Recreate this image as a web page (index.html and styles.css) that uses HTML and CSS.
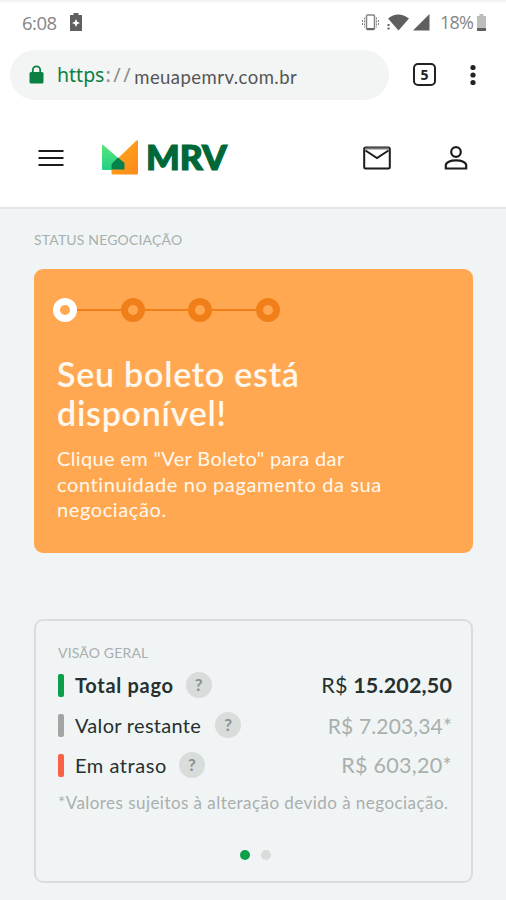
FILE: index.html
```html
<!DOCTYPE html>
<html lang="pt-BR">
  <head>
    <meta charset="UTF-8" />
    <meta name="viewport" content="width=device-width, initial-scale=1.0" />
    <title>Meu Apê MRV</title>
    <link rel="stylesheet" href="styles.css">
  </head>
  <body>
    <div class="status-bar">
      <span class="time">6:08</span>
      <svg class="charging" width="12" height="18" viewBox="0 0 12 18">
        <path fill="#5f5f5f" d="M3.5 0h5v2H12v16H0V2h3.5z" />
        <path fill="#fff" d="M6 6l1.2 2.8L10 10l-2.800 1.200L6 14l-1.200-2.800L2 10l2.800-1.200z" />
      </svg>
      <div class="status-icons">
        <svg width="17" height="17" viewBox="0 0 17 17" fill="none" stroke="#858585">
          <rect x="4.500" y="1" width="8" height="14.500" rx="1" stroke-width="1.500" />
          <path d="M5 15h7" stroke="#666" stroke-width="2" />
          <path d="M2.500 3.500v10M14.500 3.500v10M.5 6v5M16.500 6v5" stroke-dasharray="2 1" />
        </svg>
        <svg class="wifi" width="22" height="17" viewBox="0 0 22 17" fill="#5f5f5f">
          <path d="M1 4.500Q11-3.500 22 4.500L11.500 16.500z" />
          <path d="M.5 10h2v2h-2zM.5 13.500h2v2h-2z" />
        </svg>
        <svg class="signal" width="17" height="17" viewBox="0 0 17 17">
          <path fill="#5f5f5f" d="M16.500 0v16.500H0z" />
        </svg>
        <span class="percent">18%</span>
        <svg class="battery" width="9" height="17" viewBox="0 0 9 17">
          <path fill="#bdbdbd" d="M2.500 0h4v2H9v15H0V2h2.500z" />
          <path fill="#5f5f5f" d="M0 14h9v3H0z" />
        </svg>
      </div>
    </div>

    <div class="browser-bar">
      <div class="address">
        <svg width="15" height="20" viewBox="0 0 15 20">
          <rect x=".5" y="7" width="14" height="11.500" rx="1.500" fill="#0b8043" />
          <path d="M3.800 8V5a3.700 3.700 0 0 1 7.400 0v3" fill="none" stroke="#0b8043" stroke-width="1.800" />
        </svg>
        <span class="scheme">https</span><span class="slashes">://</span><span class="domain">meuapemrv.com.br</span>
      </div>
      <div class="tabs">5</div>
      <svg class="more" width="6" height="22" viewBox="0 0 6 22" fill="#222">
        <circle cx="3" cy="3.500" r="2.600" />
        <circle cx="3" cy="11" r="2.600" />
        <circle cx="3" cy="18.500" r="2.600" />
      </svg>
    </div>

    <header class="header">
      <svg class="menu" width="26" height="18" viewBox="0 0 26 18" stroke="#1c1c1c" stroke-width="2.200">
        <path d="M.5 2h25M.5 9h25M.5 16h25" />
      </svg>
      <svg class="logo" width="140" height="50" viewBox="0 -6 140 50">
        <defs>
          <linearGradient id="green" x1="0" y1="0" x2="0" y2="1">
            <stop offset="0" stop-color="#55e67c" />
            <stop offset="1" stop-color="#25cf86" />
          </linearGradient>
          <linearGradient id="orange" x1="0" y1="0" x2="1" y2="1">
            <stop offset="0" stop-color="#ffa91e" />
            <stop offset="1" stop-color="#fb8a19" />
          </linearGradient>
        </defs>
        <path fill="url(#green)" d="M1 7q0-2 1.500-.7L23.500 24.500v6.500H2q-1 0-1-1z" />
        <path fill="url(#orange)" d="M10.500 25.500L35.500 1.600q1.500-1 1.500 1V34q0 1.500-1.500 1.500h-24q-1 0-1-1z" />
        <path fill="#05814b" d="M10.500 25L17 18.500l6.500 5.500v6.500h-13z" />
        <text class="logo-text" x="45" y="31" textLength="81" lengthAdjust="spacingAndGlyphs">MRV</text>
      </svg>
      <svg class="mail" width="28" height="24" viewBox="0 0 28 24" fill="none" stroke="#1c1c1c" stroke-width="2">
        <rect x="1.200" y="1.500" width="25.600" height="21" rx="1.500" />
        <path d="M2 2.500h24" stroke="#777" />
        <path d="M2.500 4.500L14 12l11.500-7.500" />
      </svg>
      <svg class="user" width="24" height="24" viewBox="0 0 24 24" fill="none" stroke="#1c1c1c" stroke-width="2.200">
        <circle cx="12" cy="6" r="4.800" />
        <path d="M1.800 22.500v-3.200c0-3 4.500-5 10.200-5s10.200 2 10.200 5v3.200z" />
      </svg>
    </header>

    <main class="content">
      <h2 class="section-label">STATUS NEGOCIAÇÃO</h2>

      <section class="status-card">
        <div class="steps">
          <span class="step active"></span>
          <span class="line"></span>
          <span class="step"></span>
          <span class="line"></span>
          <span class="step"></span>
          <span class="line"></span>
          <span class="step"></span>
        </div>
        <h1>Seu boleto está<br>disponível!</h1>
        <p>
          <span class="lead">Clique em "Ver Boleto" para dar</span><br>
          continuidade no pagamento da sua<br>
          negociação.
        </p>
      </section>

      <section class="overview">
        <h2 class="overview-label">VISÃO GERAL</h2>
        <div class="row paid">
          <span class="name">Total pago</span>
          <span class="help">?</span>
          <span class="value">R$ <b>15.202,50</b></span>
        </div>
        <div class="row remaining">
          <span class="name">Valor restante</span>
          <span class="help">?</span>
          <span class="value">R$ 7.203,34*</span>
        </div>
        <div class="row late">
          <span class="name">Em atraso</span>
          <span class="help">?</span>
          <span class="value">R$ 603,20*</span>
        </div>
        <p class="note">*Valores sujeitos à alteração devido à negociação.</p>
        <div class="dots">
          <span class="dot current"></span>
          <span class="dot"></span>
        </div>
      </section>
    </main>
  </body>
</html>
```

FILE: styles.css
```css
* {
  box-sizing: border-box;
}

body {
  margin: 0;
  height: 900px;
  overflow: hidden;
  background-color: #f0f4f4;
  font-family: Lato, "Open Sans", sans-serif;
  color: #26302f;
}

h1,
h2,
p {
  margin: 0;
}

svg {
  display: block;
  flex: none;
}

.status-bar {
  display: flex;
  align-items: center;
  height: 44px;
  padding: 0 20px 2px 22px;
  background-color: #fff;
  border-top: 2px solid #f3f3f3;
  font-family: "Open Sans", sans-serif;
  font-size: 18px;
  color: #858585;
}

.time {
  width: 36px;
  font-size: 18.500px;
  letter-spacing: -0.5px;
}

.charging {
  margin-left: 12px;
}

.status-icons {
  display: flex;
  align-items: center;
  margin-left: auto;
}

.wifi {
  margin-left: 8px;
}

.signal {
  margin-left: 4px;
}

.percent {
  width: 34px;
  margin-left: 10px;
  letter-spacing: -0.8px;
}

.battery {
  margin-left: 3px;
}

.browser-bar {
  display: flex;
  align-items: center;
  height: 64px;
  padding: 0 30px 3px 10px;
  background-color: #fff;
}

.address {
  display: flex;
  align-items: center;
  width: 379px;
  height: 50px;
  padding-left: 19px;
  background-color: #f3f4f4;
  border-radius: 25px;
  white-space: nowrap;
}

.scheme {
  margin-left: 13px;
  font-family: "Noto Sans", sans-serif;
  font-size: 19.500px;
  color: #0b8043;
}

.slashes {
  margin-left: 1px;
  font-family: "Noto Sans", sans-serif;
  font-size: 20px;
  letter-spacing: 2.500px;
  color: #8f8f8f;
}

.domain {
  margin-top: 4px;
  margin-left: 1px;
  font-size: 18.500px;
  letter-spacing: 0.45px;
  color: #555;
}

.tabs {
  width: 23px;
  height: 23px;
  margin-left: 24px;
  border: 2px solid #222;
  border-radius: 5px;
  font-family: "Open Sans", sans-serif;
  font-size: 14px;
  font-weight: 700;
  line-height: 19px;
  text-align: center;
  color: #222;
}

.more {
  margin-left: auto;
}

.header {
  display: flex;
  align-items: center;
  height: 101px;
  padding: 0 38px 0 38px;
  background-color: #fff;
  border-bottom: 2px solid #e2e6e6;
}

.logo {
  margin-left: 37px;
}

.logo-text {
  font-family: Lato, sans-serif;
  font-size: 34px;
  font-weight: 900;
  fill: #006838;
  stroke: #006838;
  stroke-width: 1.2px;
}

.mail {
  margin-left: auto;
}

.user {
  margin-left: 53px;
}

.content {
  padding: 22px 33px 0 34px;
}

.section-label,
.overview-label {
  font-size: 14px;
  font-weight: 400;
  line-height: 18px;
  letter-spacing: 0.17px;
  color: #a9afae;
}

.status-card {
  height: 284px;
  margin-top: 20px;
  padding: 29px 19px;
  background-color: #ffa851;
  border-radius: 9px;
  color: #fff8ee;
}

.steps {
  display: flex;
  align-items: center;
}

.step {
  width: 24px;
  height: 24px;
  border: 7px solid #f07f19;
  border-radius: 50%;
}

.step.active {
  border-color: #fff;
}

.line {
  width: 43.500px;
  height: 2px;
  background-color: #f07f19;
}

.status-card h1 {
  margin: 32px 0 0 4px;
  font-size: 34px;
  font-weight: 600;
  line-height: 39px;
  letter-spacing: 0.75px;
}

.status-card p {
  margin: 14px 0 0 4px;
  font-size: 20px;
  line-height: 25.500px;
  letter-spacing: 0.6px;
  white-space: nowrap;
}

.lead {
  letter-spacing: 0.35px;
}

.overview {
  height: 264px;
  margin-top: 66px;
  padding: 23px 19px 0 22px;
  border: 2px solid #d9dddd;
  border-radius: 9px;
}

.overview-label {
  margin-bottom: 3px;
}

.row {
  display: flex;
  align-items: center;
  height: 40px;
}

.row::before {
  content: "";
  width: 6px;
  height: 23px;
  margin-right: 11px;
  border-radius: 2px;
  background-color: #a3a5a5;
}

.paid::before {
  background-color: #0b9f4b;
}

.late::before {
  background-color: #fa6045;
}

.name {
  font-size: 20px;
  letter-spacing: 0.3px;
}

.paid .name {
  font-weight: 700;
  letter-spacing: 0.7px;
}

.late .name {
  letter-spacing: 0.55px;
}

.help {
  width: 26px;
  height: 26px;
  margin-left: 12px;
  border-radius: 50%;
  background-color: #d8dcdb;
  font-size: 17px;
  font-weight: 700;
  line-height: 26px;
  text-align: center;
  color: #8b9190;
}

.remaining .help {
  margin-left: 14px;
}

.value {
  margin-left: auto;
  font-size: 21.500px;
  color: #a9afae;
}

.paid .value {
  letter-spacing: 0.15px;
  color: #26302f;
}

.remaining .value {
  font-size: 21px;
  letter-spacing: 0.15px;
}

.late .value {
  letter-spacing: 0.3px;
}

.note {
  margin-top: 7px;
  font-size: 17px;
  line-height: 22px;
  letter-spacing: 0.45px;
  color: #a9afae;
  white-space: nowrap;
}

.dots {
  display: flex;
  justify-content: center;
  gap: 11px;
  margin-top: 36px;
}

.dot {
  width: 10px;
  height: 10px;
  border-radius: 50%;
  background-color: #d8dcdb;
}

.dot.current {
  background-color: #0b9f4b;
}
```
